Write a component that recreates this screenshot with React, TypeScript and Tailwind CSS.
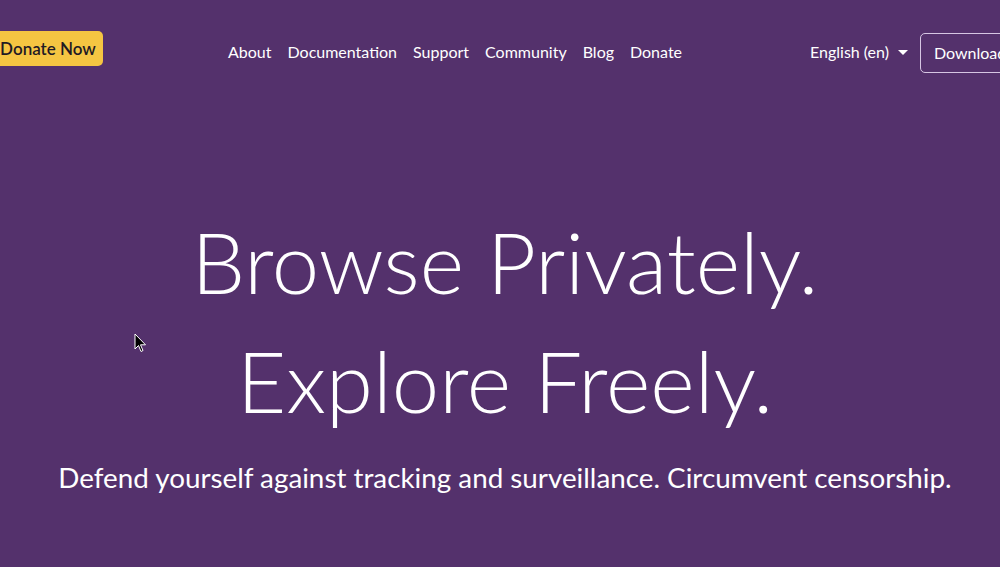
import React from "react";

const navLinks = ["About", "Documentation", "Support", "Community", "Blog", "Donate"];

const App = () => {
  return (
    <div
      className="relative w-[1000px] h-[567px] overflow-hidden bg-[#54316c] text-white"
      style={{ fontFamily: "Lato, 'Noto Sans', sans-serif" }}
    >
      <header className="flex items-start h-[100px] pt-[31px]">
        <button className="ml-[-7px] h-[35px] w-[110px] rounded-[5px] bg-[#f5c542] text-[#1f1a24] text-[17px] font-semibold leading-none">
          Donate Now
        </button>
        <nav className="flex gap-[16px] ml-[125px] mt-[11px] text-[16px] leading-5">
          {navLinks.map((l) => (
            <a key={l} href="#" className="text-white">
              {l}
            </a>
          ))}
        </nav>
        <div className="flex items-center ml-auto mt-[11px] mr-[12px] text-[16px] leading-5">
          English (en)
          <span className="ml-[9px] w-0 h-0 border-l-[5px] border-r-[5px] border-t-[5px] border-l-transparent border-r-transparent border-t-white" />
        </div>
        <button className="mt-[2px] mr-[-30px] h-[40px] w-[110px] rounded-[5px] border border-[#d6c6e3] text-left pl-[13px] text-[16px]">
          Download
        </button>
      </header>

      <main className="flex flex-col items-center pl-[10px] pt-[102px]">
        <h1 className="text-center font-light text-[85px] leading-[119px]">
          Browse Privately.
          <br />
          Explore Freely.
        </h1>
        <p className="mt-[22px] text-[27.8px] leading-8">
          Defend yourself against tracking and surveillance. Circumvent censorship.
        </p>
      </main>

      <svg
        className="absolute left-[134px] top-[333px]"
        width="14"
        height="21"
        viewBox="0 0 14 21"
      >
        <path
          d="M1 1 L1 16 L4.5 12.5 L7 18.5 L9 17.5 L6.5 11.8 L11.5 11.8 Z"
          fill="#000"
          stroke="#fff"
          strokeWidth="1"
        />
      </svg>
    </div>
  );
};

export default App;
